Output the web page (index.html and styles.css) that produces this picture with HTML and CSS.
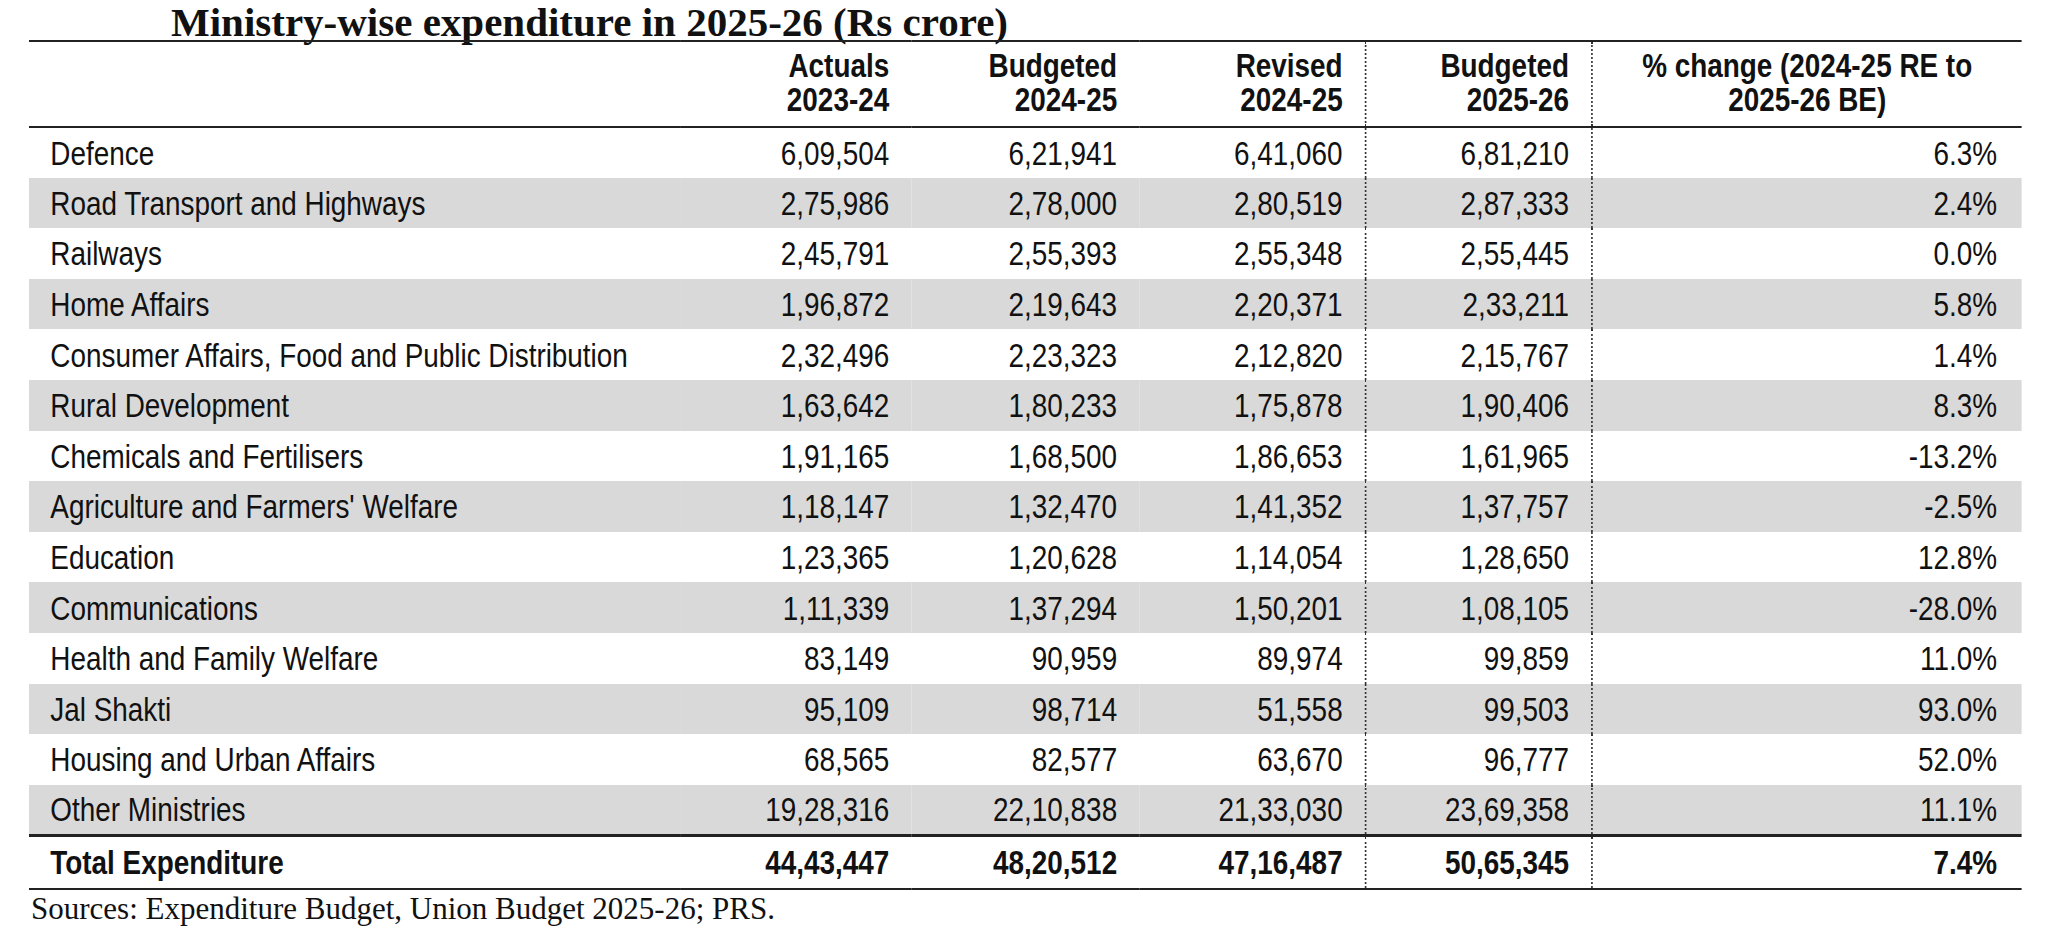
FILE: index.html
```html
<!DOCTYPE html>
<html lang="en">
<head>
    <meta charset="UTF-8">
    <title>Ministry-wise expenditure in 2025-26</title>
    <link rel="stylesheet" href="styles.css">
</head>
<body>
    <div class="page">
        <h1 class="title">Ministry-wise expenditure in 2025-26 (Rs crore)</h1>
        <div class="table-wrap">
            <table class="spend">
                <thead>
                    <tr>
                        <th class="label"></th>
                        <th>Actuals<br>2023-24</th>
                        <th>Budgeted<br>2024-25</th>
                        <th>Revised<br>2024-25</th>
                        <th class="dot">Budgeted<br>2025-26</th>
                        <th class="dot change">% change (2024-25 RE to<br>2025-26 BE)</th>
                    </tr>
                </thead>
                <tbody>
                    <tr><td class="label">Defence</td><td>6,09,504</td><td>6,21,941</td><td>6,41,060</td><td class="dot">6,81,210</td><td class="dot">6.3%</td></tr>
                    <tr><td class="label">Road Transport and Highways</td><td>2,75,986</td><td>2,78,000</td><td>2,80,519</td><td class="dot">2,87,333</td><td class="dot">2.4%</td></tr>
                    <tr><td class="label">Railways</td><td>2,45,791</td><td>2,55,393</td><td>2,55,348</td><td class="dot">2,55,445</td><td class="dot">0.0%</td></tr>
                    <tr><td class="label">Home Affairs</td><td>1,96,872</td><td>2,19,643</td><td>2,20,371</td><td class="dot">2,33,211</td><td class="dot">5.8%</td></tr>
                    <tr><td class="label">Consumer Affairs, Food and Public Distribution</td><td>2,32,496</td><td>2,23,323</td><td>2,12,820</td><td class="dot">2,15,767</td><td class="dot">1.4%</td></tr>
                    <tr><td class="label">Rural Development</td><td>1,63,642</td><td>1,80,233</td><td>1,75,878</td><td class="dot">1,90,406</td><td class="dot">8.3%</td></tr>
                    <tr><td class="label">Chemicals and Fertilisers</td><td>1,91,165</td><td>1,68,500</td><td>1,86,653</td><td class="dot">1,61,965</td><td class="dot">-13.2%</td></tr>
                    <tr><td class="label">Agriculture and Farmers' Welfare</td><td>1,18,147</td><td>1,32,470</td><td>1,41,352</td><td class="dot">1,37,757</td><td class="dot">-2.5%</td></tr>
                    <tr><td class="label">Education</td><td>1,23,365</td><td>1,20,628</td><td>1,14,054</td><td class="dot">1,28,650</td><td class="dot">12.8%</td></tr>
                    <tr><td class="label">Communications</td><td>1,11,339</td><td>1,37,294</td><td>1,50,201</td><td class="dot">1,08,105</td><td class="dot">-28.0%</td></tr>
                    <tr><td class="label">Health and Family Welfare</td><td>83,149</td><td>90,959</td><td>89,974</td><td class="dot">99,859</td><td class="dot">11.0%</td></tr>
                    <tr><td class="label">Jal Shakti</td><td>95,109</td><td>98,714</td><td>51,558</td><td class="dot">99,503</td><td class="dot">93.0%</td></tr>
                    <tr><td class="label">Housing and Urban Affairs</td><td>68,565</td><td>82,577</td><td>63,670</td><td class="dot">96,777</td><td class="dot">52.0%</td></tr>
                    <tr><td class="label">Other Ministries</td><td>19,28,316</td><td>22,10,838</td><td>21,33,030</td><td class="dot">23,69,358</td><td class="dot">11.1%</td></tr>
                </tbody>
                <tfoot>
                    <tr><td class="label">Total Expenditure</td><td>44,43,447</td><td>48,20,512</td><td>47,16,487</td><td class="dot">50,65,345</td><td class="dot">7.4%</td></tr>
                </tfoot>
            </table>
        </div>
        <p class="source">Sources: Expenditure Budget, Union Budget 2025-26; PRS.</p>
    </div>
</body>
</html>
```

FILE: styles.css
```css
/* Page */
body {
    margin: 0;
    background-color: #fff;
    color: #111;
}

.page {
    padding-left: 29px;
    width: 1993px;
}

.title {
    margin: 0;
    height: 40px;
    padding-left: 142px;
    font-family: "Liberation Serif", "Times New Roman", serif;
    font-size: 41px;
    font-weight: bold;
    line-height: 44px;
    white-space: nowrap;
}

/* Table - no narrow font installed, so the table is drawn wide
   and squeezed to the width of Arial Narrow */
.table-wrap {
    width: 1993px;
    overflow: hidden;
}

.spend {
    width: 2430px;
    border-collapse: collapse;
    table-layout: fixed;
    transform: scaleX(0.82);
    transform-origin: left top;
    font-family: "Liberation Sans", Arial, sans-serif;
    font-size: 34px;
}

.spend th,
.spend td {
    box-sizing: border-box;
    padding: 0 27px 0 0;
    text-align: right;
    white-space: nowrap;
}

.spend thead tr {
    border-top: 2px solid #222;
    border-bottom: 2px solid #222;
}

.spend th {
    height: 86px;
    padding-bottom: 5px;
    line-height: 34px;
    font-weight: bold;
    vertical-align: middle;
}

.spend th.label,
.spend td.label {
    width: 794px;
    padding-left: 26px;
    text-align: left;
}

.spend th:nth-child(2) { width: 282px; }
.spend th:nth-child(3) { width: 278px; }
.spend th:nth-child(4) { width: 276px; }
.spend th:nth-child(5) { width: 276px; }

.spend th.change {
    text-align: center;
    padding-right: 0;
}

.spend td:last-child {
    padding-right: 30px;
}

.spend tbody td {
    height: 50.6px;
    line-height: 34px;
}

.spend tbody tr:nth-child(even) {
    background-color: #d9d9d9;
}

.spend .dot {
    border-left: 2px dotted #333;
}

.spend tfoot tr {
    border-top: 3px solid #222;
    border-bottom: 2px solid #222;
}

.spend tfoot td {
    height: 54px;
    font-weight: bold;
}

/* Footnote */
.source {
    margin: 0;
    padding-left: 2px;
    font-family: "Liberation Serif", "Times New Roman", serif;
    font-size: 31px;
    line-height: 38px;
}
```
